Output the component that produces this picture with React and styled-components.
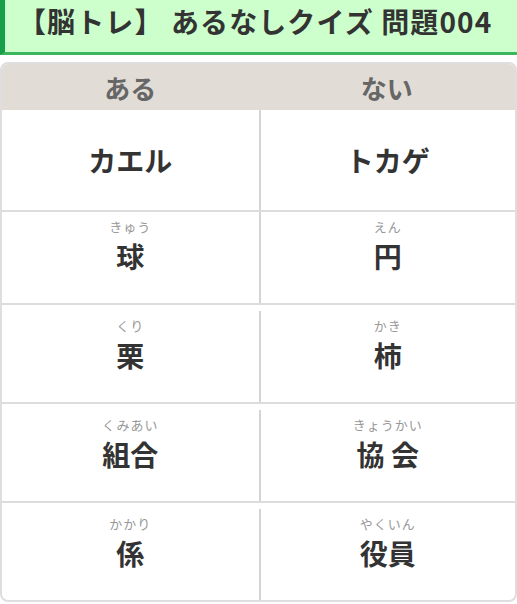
import React from "react";
import styled, { createGlobalStyle } from "styled-components";

const GlobalStyle = createGlobalStyle`
  body {
    margin: 0;
    background: #fff;
    font-family: "Noto Sans CJK JP", "Noto Sans", sans-serif;
  }
`;

const Page = styled.div`
  width: 517px;
`;

const Title = styled.h2`
  margin: 0;
  padding: 3px 0 13px 13px;
  line-height: 36px;
  font-size: 28px;
  font-weight: 700;
  letter-spacing: 1.1px;
  color: #333;
  background: #ccffcc;
  border-left: 5px solid #16a049;
  border-bottom: 3px solid #3cb65c;
  white-space: nowrap;
`;

const Table = styled.div`
  margin-top: 7px;
  border: 2px solid #dedede;
  border-radius: 8px;
  overflow: hidden;
`;

const HeadRow = styled.div`
  display: grid;
  grid-template-columns: 1fr 1fr;
  background: #e2dcd7;
  height: 46px;
`;

const HeadCell = styled.div`
  display: flex;
  align-items: center;
  justify-content: center;
  font-size: 26px;
  font-weight: 700;
  color: #666;
`;

const Row = styled.div`
  display: grid;
  grid-template-columns: 1fr 1fr;
  border-top: ${(p) => (p.$first ? "none" : "2px solid #dcdcdc")};
  padding-top: ${(p) => p.$lead}px;
`;

const Cell = styled.div`
  height: ${(p) => p.$h}px;
  display: flex;
  flex-direction: column;
  align-items: center;
  border-left: ${(p) => (p.$right ? "2px solid #d4d4d4" : "none")};
  padding-top: ${(p) => p.$pad}px;
  box-sizing: border-box;
`;

const Ruby = styled.div`
  font-size: 13px;
  line-height: 16px;
  height: 16px;
  color: #999;
  letter-spacing: 1px;
`;

const Word = styled.div`
  font-size: 28px;
  line-height: 40px;
  font-weight: 700;
  color: #333;
  margin-top: ${(p) => p.$gap || 0}px;
`;

const rows = [
  [{ ruby: "きゅう", word: "球" }, { ruby: "えん", word: "円" }],
  [{ ruby: "くり", word: "栗" }, { ruby: "かき", word: "柿" }],
  [{ ruby: "くみあい", word: "組合" }, { ruby: "きょうかい", word: "協 会" }],
  [{ ruby: "かかり", word: "係" }, { ruby: "やくいん", word: "役員" }],
];

export default function App() {
  return (
    <Page>
      <GlobalStyle />
      <Title>【脳トレ】 あるなしクイズ 問題004</Title>
      <Table>
        <HeadRow>
          <HeadCell>ある</HeadCell>
          <HeadCell>ない</HeadCell>
        </HeadRow>
        <Row $first $lead={0}>
          <Cell $h={100} $pad={30}>
            <Word>カエル</Word>
          </Cell>
          <Cell $h={100} $pad={30} $right>
            <Word>トカゲ</Word>
          </Cell>
        </Row>
        {rows.map((r, i) => (
          <Row key={i} $lead={i === 0 ? 0 : 6}>
            {r.map((c, j) => (
              <Cell key={j} $h={91} $pad={7} $right={j === 1}>
                <Ruby>{c.ruby}</Ruby>
                <Word $gap={1}>{c.word}</Word>
              </Cell>
            ))}
          </Row>
        ))}
      </Table>
    </Page>
  );
}
